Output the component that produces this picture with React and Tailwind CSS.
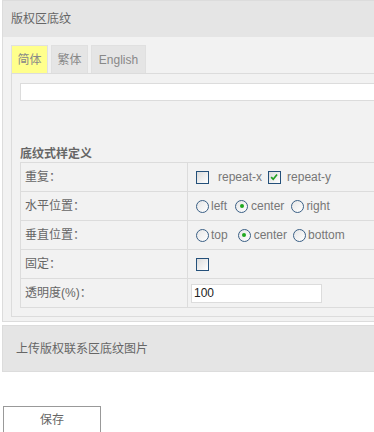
import { useState } from 'react'

const FONT = "font-['Liberation_Sans','Noto_Sans_CJK_SC',sans-serif]"

function Box({ checked }) {
  return (
    <span className="relative inline-block h-[13px] w-[13px] shrink-0 border border-[#24507a] bg-gradient-to-br from-[#dcdcdc] to-white">
      {checked && (
        <svg viewBox="0 0 13 13" className="absolute left-0 top-0 h-[11px] w-[11px]">
          <path d="M2.5 6 L5 8.5 L9.5 3" fill="none" stroke="#22a022" strokeWidth="2" />
        </svg>
      )}
    </span>
  )
}

function Radio({ on }) {
  return (
    <span className="flex h-[13px] w-[13px] shrink-0 items-center justify-center rounded-full border border-[#3a5f85] bg-gradient-to-br from-[#e6e6e6] to-white">
      {on && <span className="h-[4px] w-[4px] rounded-full bg-[#1fa81f]" />}
    </span>
  )
}

function Row({ label, children, cellClass = 'pl-[8px]' }) {
  return (
    <div className="flex h-[29px] border-b border-[#dcdcdc]">
      <div className="flex w-[167px] shrink-0 items-center border-r border-[#dcdcdc] pl-[4px] text-[#666]">
        {label}
      </div>
      <div className={`flex items-center text-[#777] ${cellClass}`}>{children}</div>
    </div>
  )
}

export default function App() {
  const [tab, setTab] = useState(0)
  const tabs = [
    { label: '简体', w: 'w-[37px]' },
    { label: '繁体', w: 'w-[37px]' },
    { label: 'English', w: 'w-[55px]' },
  ]

  return (
    <div className={`h-[432px] w-full overflow-hidden bg-white text-[12px] ${FONT}`}>
      {/* main panel */}
      <div className="ml-[2px] w-[440px] border border-[#dcdcdc]">
        <div className="flex h-[36px] items-center bg-[#e5e5e5] pl-[8px] text-[#666]">版权区底纹</div>
        <div className="bg-[#f2f2f2] pb-[4px] pl-[8px] pt-[8px]">
          <div className="flex gap-[3px]">
            {tabs.map((t, i) => (
              <button
                key={t.label}
                onClick={() => setTab(i)}
                className={`flex h-[28px] items-center justify-center border border-b-0 border-[#e0e0e0] text-[#888] ${t.w} ${
                  tab === i ? 'bg-[#ffff8c] text-[#777]' : 'bg-[#e5e5e5]'
                }`}
              >
                {t.label}
              </button>
            ))}
          </div>
          <div className="border border-[#dcdcdc] pb-[8px] pl-[8px] pt-[9px]">
            <div className="h-[18px] w-full border border-[#dcdcdc] bg-white" />
            <div className="mt-[45px] h-[16px] font-bold leading-[16px] text-[#666]">底纹式样定义</div>
            <div className="border-l border-t border-[#dcdcdc]">
              <Row label="重复：">
                <Box />
                <span className="ml-[9px] mr-[6px]">repeat-x</span>
                <Box checked />
                <span className="ml-[6px]">repeat-y</span>
              </Row>
              <Row label="水平位置：">
                <Radio />
                <span className="ml-[2px] mr-[8px]">left</span>
                <Radio on />
                <span className="ml-[3px] mr-[7px]">center</span>
                <Radio />
                <span className="ml-[2px]">right</span>
              </Row>
              <Row label="垂直位置：">
                <Radio />
                <span className="ml-[2px] mr-[10px]">top</span>
                <Radio on />
                <span className="ml-[3px] mr-[6px]">center</span>
                <Radio />
                <span className="ml-[2px]">bottom</span>
              </Row>
              <Row label="固定：">
                <Box />
              </Row>
              <Row label="透明度(%)：" cellClass="pl-[3px]">
                <div className="flex h-[19px] w-[131px] items-center border border-[#dcdcdc] bg-white pl-[2px] text-[#222]">
                  100
                </div>
              </Row>
            </div>
          </div>
        </div>
      </div>

      {/* upload panel */}
      <div className="ml-[2px] mt-[3px] flex h-[47px] w-[440px] items-center border border-[#dcdcdc] bg-[#e5e5e5] pl-[13px] text-[#666]">
        上传版权联系区底纹图片
      </div>

      <button className="ml-[3px] mt-[34px] flex h-[28px] w-[98px] items-start justify-center border border-[#999] bg-white pt-[4px] text-[#666]">
        保存
      </button>
    </div>
  )
}
